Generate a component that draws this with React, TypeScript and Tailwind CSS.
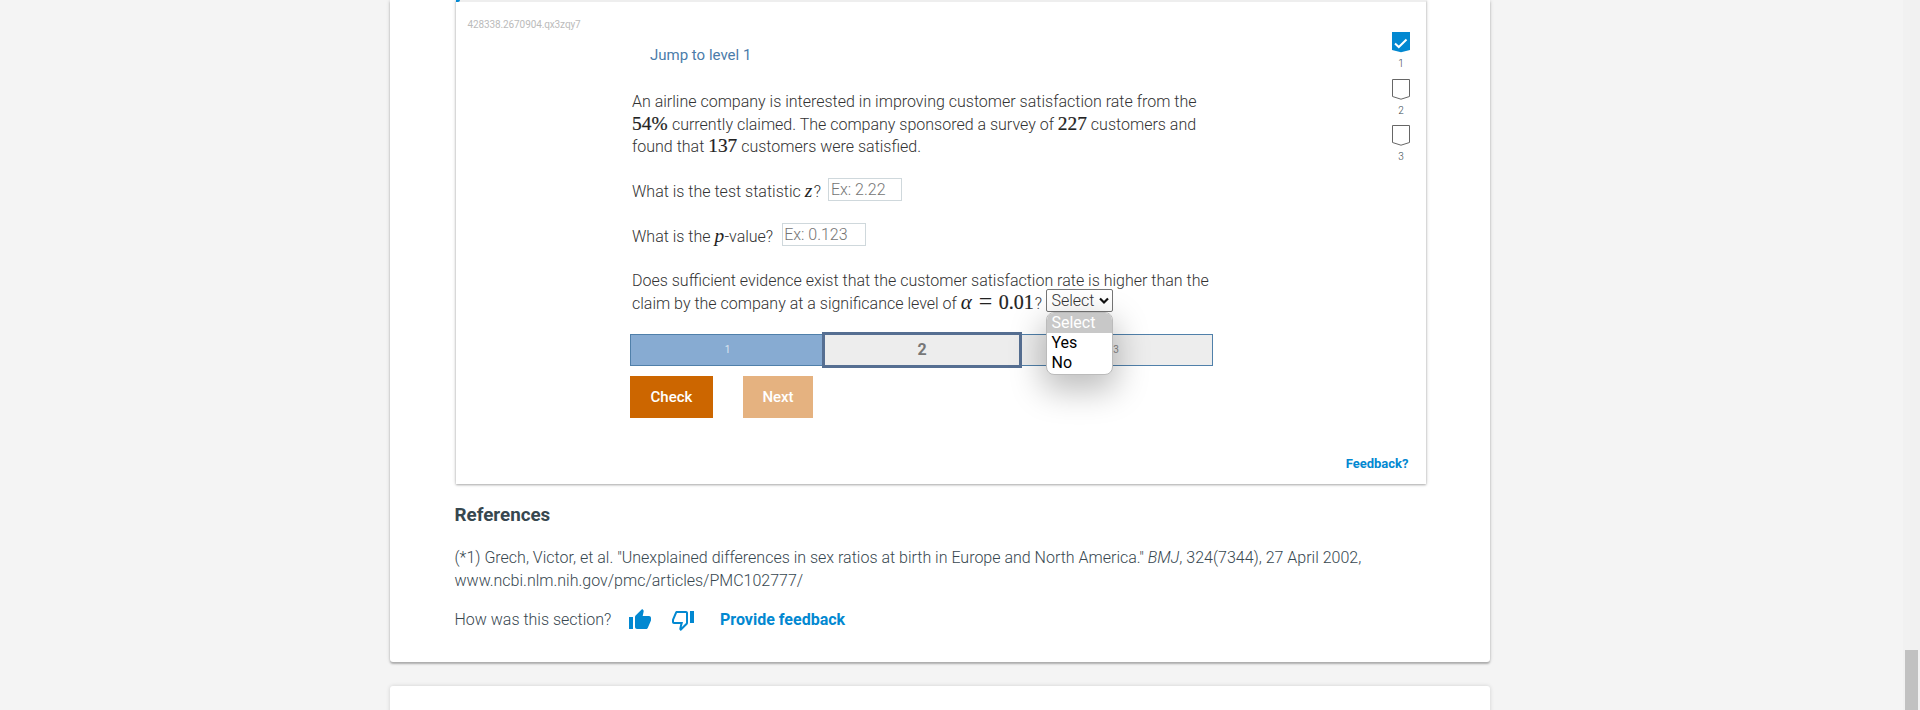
import { clsx } from "clsx";
import type { ReactNode } from "react";

const steps = [
  { label: "1", done: true },
  { label: "2", done: false },
  { label: "3", done: false },
];

const options = ["Select", "Yes", "No"];

function Num({ children, className }: { children: ReactNode; className?: string }) {
  return (
    <span
      className={clsx(
        "inline-block whitespace-nowrap font-['Liberation_Serif',serif] text-[19.4px] font-normal leading-[0] text-[#222]",
        className,
      )}
    >
      {children}
    </span>
  );
}

function Line({ children }: { children?: ReactNode }) {
  return <div className="h-[22.4px] whitespace-nowrap">{children}</div>;
}

function StepMarker({ label, done }: { label: string; done: boolean }) {
  return (
    <div className="flex h-[46.5px] w-[18px] flex-col items-center">
      <svg width="18" height="21" viewBox="0 0 18 21" className="shrink-0">
        {done ? (
          <>
            <path d="M0 0H18V18L9 20.2L0 18Z" fill="#0288d1" />
            <path d="M3 11.5L6.8 15L14.5 7.5" fill="none" stroke="#fff" strokeWidth="2" />
          </>
        ) : (
          <path d="M0.5 0.5H17.5V17.5L9 20.2L0.5 17.5Z" fill="#fff" stroke="#666" />
        )}
      </svg>
      <span className="mt-[5px] text-[10px] font-light leading-[12px] text-[#37474f]">{label}</span>
    </div>
  );
}

function AnswerSelect() {
  return (
    <span className="relative -top-[4px] inline-flex h-[23px] w-[67px] items-center rounded-[2px] border border-[#767676] bg-white pl-1 align-middle leading-none">
      Select
      <svg width="10" height="8" viewBox="0 0 10 8" className="ml-[4px]">
        <path d="M1 1.5L5 5.5L9 1.5" fill="none" stroke="#111" strokeWidth="2.2" />
      </svg>
      <span className="absolute -left-px top-[22px] z-10 flex h-[63px] w-[67px] flex-col overflow-hidden rounded-[8px] border border-[#bbb] bg-white font-normal text-black shadow-[0_12px_32px_4px_rgba(0,0,0,0.25)]">
        {options.map((option, index) => (
          <span
            key={option}
            className={clsx(
              "flex h-[20px] shrink-0 items-center pl-1",
              index === 0 && "bg-[#c8c8c8] text-white",
            )}
          >
            {option}
          </span>
        ))}
      </span>
    </span>
  );
}

function Question() {
  return (
    <div className="pl-[2px] text-[16px] font-light leading-[22.4px] text-[#333]">
      <Line>An airline company is interested in improving customer satisfaction rate from the</Line>
      <Line>
        <Num className="w-[36px] [-webkit-text-stroke:0.2px_#222]">54%</Num> currently claimed. The
        company sponsored a survey of <Num className="[-webkit-text-stroke:0.2px_#222]">227</Num>{" "}
        customers and
      </Line>
      <Line>
        found that <Num className="[-webkit-text-stroke:0.2px_#222]">137</Num> customers were
        satisfied.
      </Line>
      <Line />
      <Line>
        What is the test statistic <Num className="w-[9px] italic">z</Num>?
        <input
          placeholder="Ex: 2.22"
          className="relative -top-[3px] ml-[7.5px] h-[23px] w-[74px] border border-[#cfd8dc] pl-[1.5px] align-middle font-light leading-none placeholder:text-[#757575]"
        />
      </Line>
      <Line />
      <Line>
        What is the <Num className="w-[10px] italic">p</Num>-value?
        <input
          placeholder="Ex: 0.123"
          className="relative -top-[3px] ml-[8.5px] h-[23px] w-[84px] border border-[#cfd8dc] pl-[1.5px] align-middle font-light leading-none placeholder:text-[#757575]"
        />
      </Line>
      <Line />
      <Line>Does sufficient evidence exist that the customer satisfaction rate is higher than the</Line>
      <Line>
        claim by the company at a significance level of{" "}
        <Num>
          <span className="inline-block w-[18px] text-[21px] italic">α</span>
          <span className="inline-block w-[20px] text-[24px]">=</span>
          <span className="inline-block w-[36px] text-[20px] [-webkit-text-stroke:0.2px_#222]">
            0.01
          </span>
        </Num>
        ?<span className="inline-block w-[4.5px]" />
        <AnswerSelect />
      </Line>
    </div>
  );
}

function LevelBar() {
  return (
    <div className="flex h-[36px] w-[583px] items-center text-[10px] text-[#888]">
      <div className="flex h-[32px] w-[192px] items-center justify-center border border-r-0 border-[#5080aa] bg-[#87abd2] pl-[2px] text-[#dce6f0]">
        1
      </div>
      <div className="flex h-[36px] w-[200px] items-center justify-center border-[3px] border-[#566f92] bg-[#ededed] text-[16px] font-bold text-[#777]">
        2
      </div>
      <div className="flex h-[32px] w-[191px] items-center justify-center border border-l-0 border-[#5080aa] bg-[#ededed] pr-[2px]">
        3
      </div>
    </div>
  );
}

function Activity() {
  return (
    <section className="ml-[66px] flex h-[484px] w-[970px] flex-col bg-white shadow-[0_1px_2px_0_rgba(0,0,0,0.25),0_0_4px_0_rgba(0,0,0,0.2)]">
      <div className="h-[2px] shrink-0 bg-[#eee]">
        <div className="h-[2px] w-[4px] rounded-br-full bg-[#0288d1]" />
      </div>
      <div className="flex flex-1">
        <div className="w-[174px] shrink-0 pl-[11.5px] pt-[16px] text-[10px] leading-[14px] tracking-[-0.11px] text-[#bbb]">
          428338.2670904.qx3zqy7
        </div>
        <div className="flex w-[583px] flex-col">
          <a className="ml-5 mt-[42px] text-[15px] leading-[22px] text-[#4b7caa]">Jump to level 1</a>
          <div className="mt-[25.3px]">
            <Question />
          </div>
          <div className="mt-[16.7px]">
            <LevelBar />
          </div>
          <div className="mt-2 flex gap-[30px] text-[15px] font-medium text-white">
            <button className="h-[42px] w-[83px] bg-[#cc6600]">Check</button>
            <button className="h-[42px] w-[70px] bg-[#e5b280]">Next</button>
          </div>
        </div>
        <div className="ml-auto mr-[16px] mt-[30px] flex flex-col items-end">
          {steps.map((step) => (
            <StepMarker key={step.label} {...step} />
          ))}
        </div>
      </div>
      <a className="mb-[10px] mr-[17.5px] self-end text-[13px] font-bold leading-[20px] text-[#0288d1]">
        Feedback?
      </a>
    </section>
  );
}

function ThumbUp() {
  return (
    <svg width="24" height="24" viewBox="0 0 24 24" fill="#0288d1">
      <path d="M1 21h4V9H1v12zm22-11c0-1.100-.9-2-2-2h-6.310l.95-4.570.03-.32c0-.41-.17-.79-.44-1.060L14.170 1 7.590 7.590C7.220 7.950 7 8.450 7 9v10c0 1.100.9 2 2 2h9c.83 0 1.540-.5 1.840-1.220l3.020-7.050c.09-.23.14-.47.14-.73v-2z" />
    </svg>
  );
}

function ThumbDown() {
  return (
    <svg width="24" height="24" viewBox="0 0 24 24" fill="#0288d1">
      <path d="M15 3H6c-.83 0-1.540.5-1.840 1.220l-3.020 7.050c-.09.23-.14.47-.14.73v2c0 1.100.9 2 2 2h6.310l-.95 4.570-.03.32c0 .41.17.79.44 1.060L9.830 23l6.590-6.590c.36-.36.58-.86.58-1.410V5c0-1.100-.9-2-2-2zm0 12l-4.340 4.340L12 14H3v-2l3-7h9v10zm4-12h4v12h-4z" />
    </svg>
  );
}

export default function App() {
  return (
    <div className="flex h-[710px] w-full overflow-hidden bg-[#f4f4f4] font-['Roboto',sans-serif]">
      <main className="flex flex-1 flex-col items-start pl-[390px]">
        <article className="h-[662px] w-[1100px] shrink-0 rounded-b-[3px] bg-white shadow-[0_2px_2px_0_rgba(0,0,0,0.25),0_0_4px_0_rgba(0,0,0,0.15)]">
          <Activity />
          <div className="px-[64.5px] text-[16px] font-light leading-[23px] text-[#37474f]">
            <h2 className="mt-[19px] text-[18.8px] font-bold leading-[25px]">References</h2>
            <p className="mt-[18px] whitespace-nowrap">
              (*1) Grech, Victor, et al. "Unexplained differences in sex ratios at birth in Europe and
              North America." <i>BMJ</i>, 324(7344), 27 April 2002,
              <br />
              www.ncbi.nlm.nih.gov/pmc/articles/PMC102777/
            </p>
            <div className="mt-[16px] flex h-[24px] items-center">
              <span className="w-[173.5px] pb-[2px]">How was this section?</span>
              <ThumbUp />
              <span className="ml-[18.5px]">
                <ThumbDown />
              </span>
              <a className="ml-[25.5px] pb-[2px] font-bold text-[#0288d1]">Provide feedback</a>
            </div>
          </div>
        </article>
        <article className="mt-[24px] h-[60px] w-[1100px] shrink-0 rounded-t-[3px] bg-white shadow-[0_0_4px_0_rgba(0,0,0,0.15)]" />
      </main>
      <div className="flex w-[17px] flex-col justify-end bg-[#f1f1f1] pl-[2px]">
        <div className="h-[60px] w-[13px] bg-[#c1c1c1]" />
      </div>
    </div>
  );
}
